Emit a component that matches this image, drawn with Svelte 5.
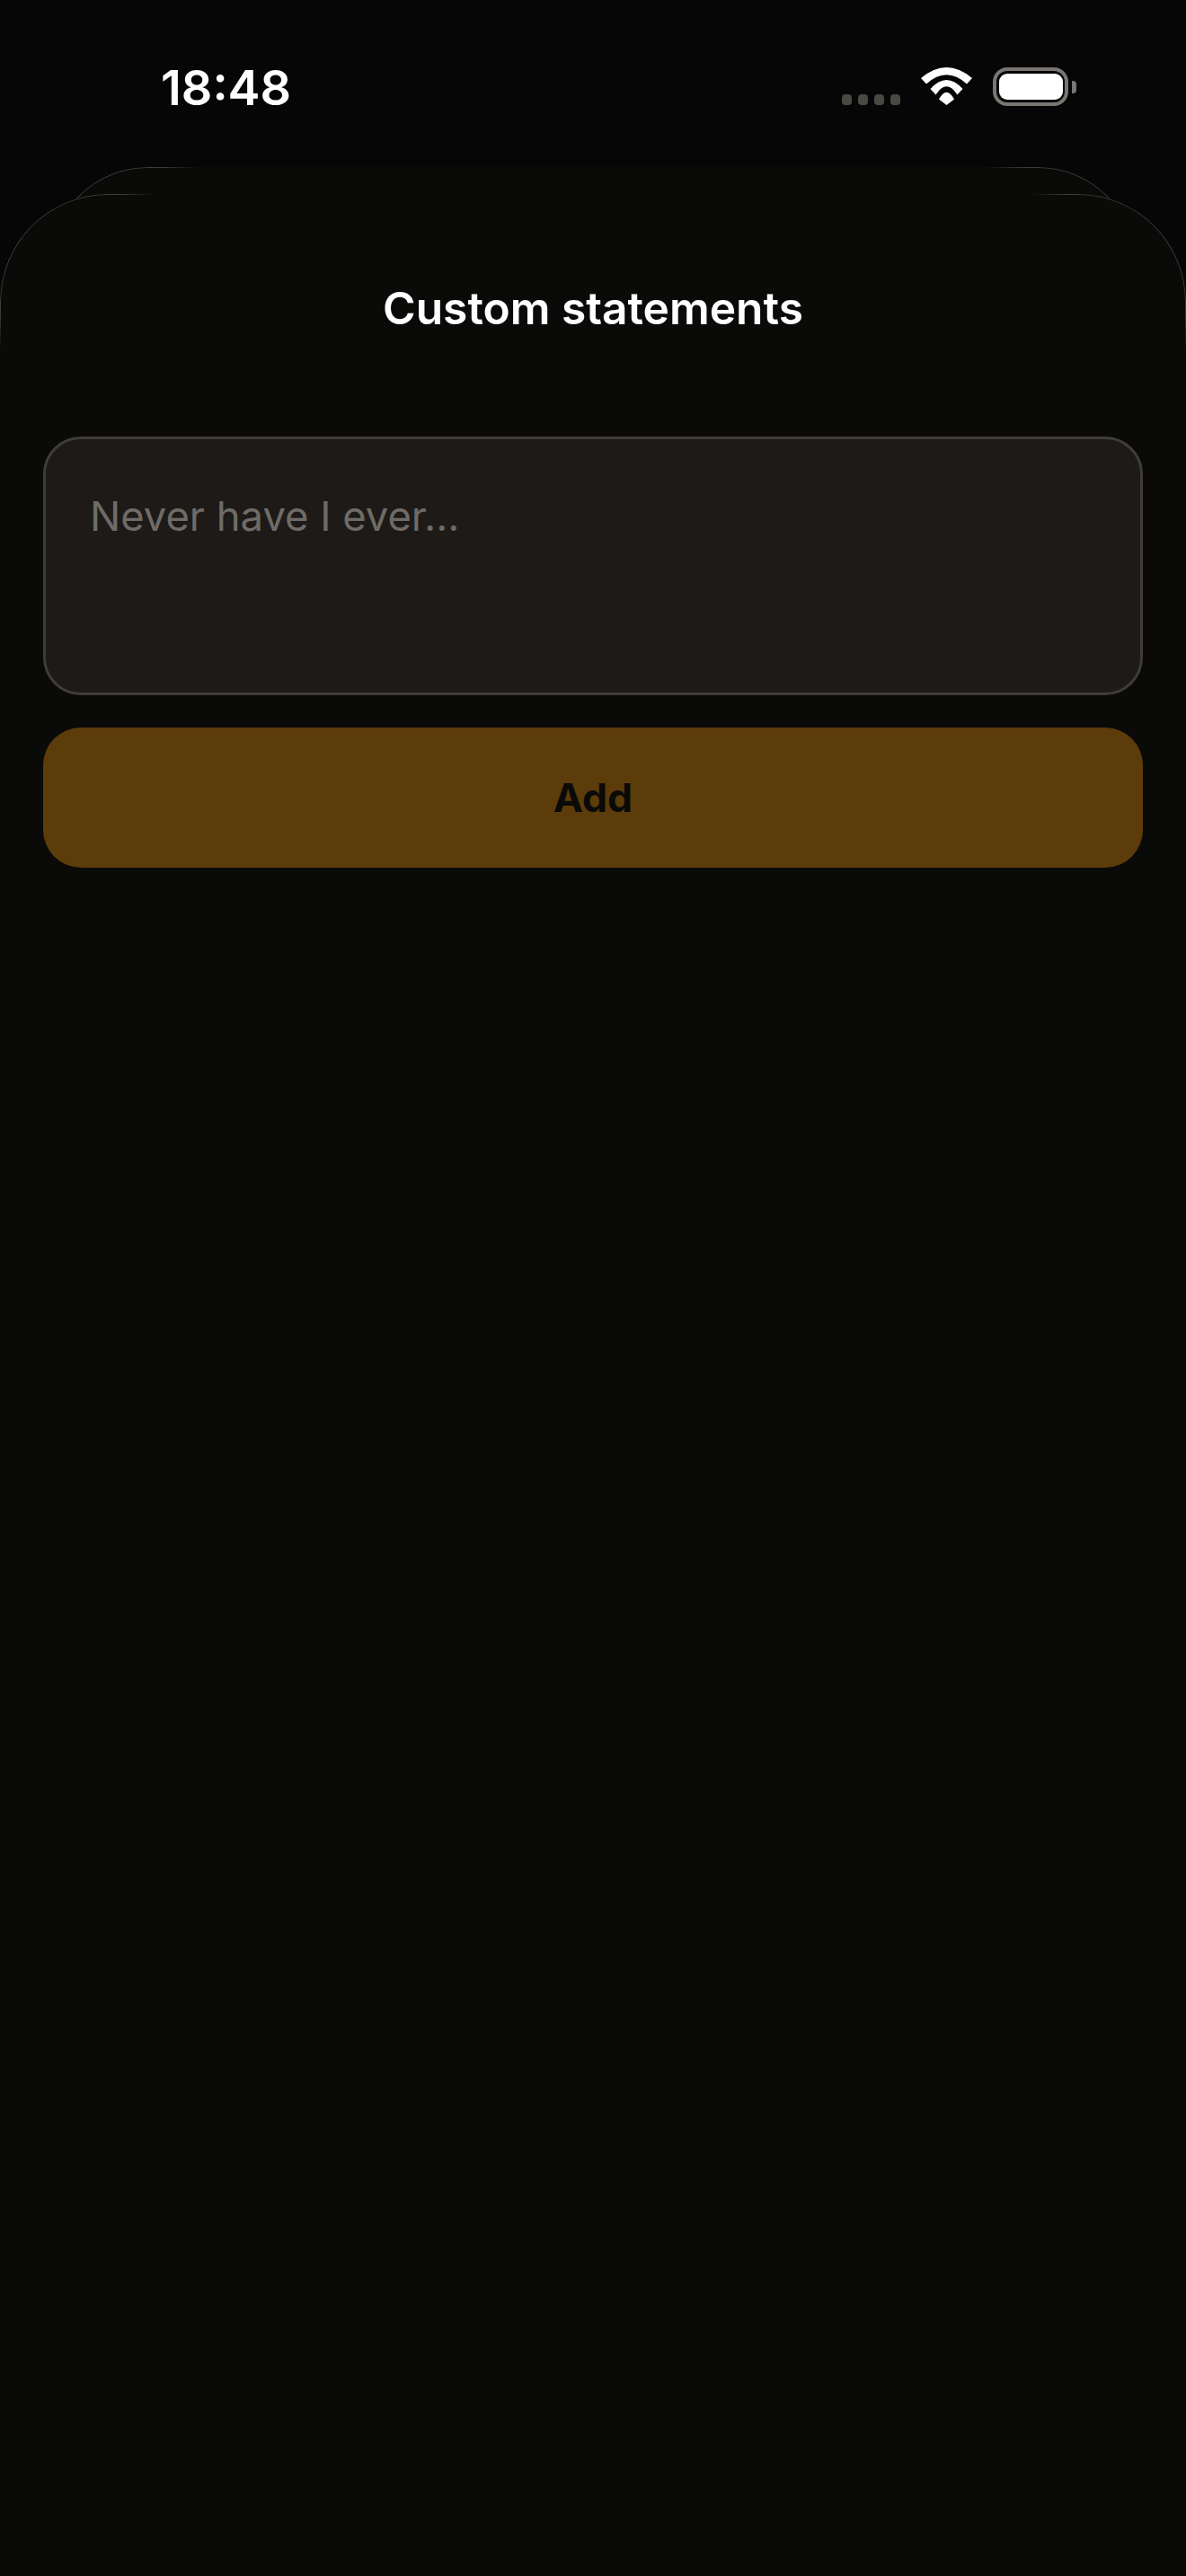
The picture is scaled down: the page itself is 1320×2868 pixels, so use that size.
<script>
  let statement = $state("");
</script>

<div class="page">
  <header class="status">
    <span class="time">18:48</span>
    <div class="status-icons">
      <div class="signal">
        <i></i><i></i><i></i><i></i>
      </div>
      <svg class="wifi" viewBox="0 0 57 42" aria-hidden="true">
        <path d="M0 12 Q28.5 -12 57 12 L51 18.5 Q28.5 -2 6 18.5 Z" />
        <path d="M10.5 24 Q28.5 4 46.5 24 L40.5 30.5 Q28.5 12 16.5 30.5 Z" />
        <path d="M20 35.5 Q28.5 20 37 35.5 L28.5 42 Z" />
      </svg>
      <div class="battery">
        <div class="battery-body"><div class="battery-fill"></div></div>
        <div class="battery-nub"></div>
      </div>
    </div>
  </header>

  <div class="sheet-behind"></div>

  <main class="sheet">
    <h1>Custom statements</h1>
    <textarea bind:value={statement} placeholder="Never have I ever..."></textarea>
    <button type="button">Add</button>
  </main>
</div>

<style>
  :global(body) {
    background: #060606;
  }

  .page {
    display: flex;
    flex-direction: column;
    height: 2868px;
    font-family: Inter, "Liberation Sans", sans-serif;
    background: #060606;
  }

  .status {
    display: flex;
    justify-content: space-between;
    align-items: flex-end;
    box-sizing: border-box;
    height: 186px;
    padding: 0 122px 69px 179px;
  }

  .time {
    position: relative;
    top: 2px;
    font-size: 54px;
    line-height: 42px;
    font-weight: 600;
    color: #fff;
  }

  .status-icons {
    display: flex;
    align-items: flex-end;
    gap: 23px;
  }

  .signal {
    display: flex;
    gap: 7px;
  }

  .signal i {
    display: block;
    width: 11px;
    height: 12px;
    border-radius: 4px;
    background: #4a4843;
  }

  .wifi {
    display: block;
    width: 57px;
    height: 42px;
    fill: #fff;
  }

  .battery {
    display: flex;
    align-items: center;
    gap: 4px;
    margin-bottom: -1px;
  }

  .battery-body {
    box-sizing: border-box;
    width: 84px;
    height: 43px;
    padding: 3px 2px 3px 3px;
    border: 4px solid #7a7672;
    border-radius: 16px;
  }

  .battery-fill {
    height: 100%;
    border-radius: 9px;
    background: #fff;
  }

  .battery-nub {
    width: 5px;
    height: 14px;
    border-radius: 0 4px 4px 0;
    background: #7a7672;
  }

  /* stacked sheet peeking out behind the modal */
  .sheet-behind {
    position: relative;
    height: 30px;
    margin: 0 55px;
  }

  .sheet-behind::before {
    content: "";
    position: absolute;
    top: 0;
    left: 0;
    right: 0;
    height: 170px;
    border-radius: 110px 110px 0 0;
    background: #0a0a09;
  }

  .sheet-behind::after {
    content: "";
    position: absolute;
    top: 0;
    left: 0;
    right: 0;
    height: 170px;
    box-sizing: border-box;
    border: 1px solid #3d3d3a;
    border-bottom: 0;
    border-radius: 110px 110px 0 0;
    mask-image:
      radial-gradient(circle at 0 0, #000 125px, transparent 165px),
      radial-gradient(circle at 100% 0, #000 125px, transparent 165px);
  }

  .sheet {
    position: relative;
    flex: 1;
    display: flex;
    flex-direction: column;
    padding: 0 48px;
    border-radius: 120px 120px 0 0;
    background: #0a0a09;
  }

  /* the hairline only shows around the corners and fades out along the edges */
  .sheet::before {
    content: "";
    position: absolute;
    inset: 0;
    box-sizing: border-box;
    border: 1px solid #3d3d3a;
    border-bottom: 0;
    border-radius: inherit;
    pointer-events: none;
    mask-image:
      radial-gradient(circle at 0 0, #000 135px, transparent 172px),
      radial-gradient(circle at 100% 0, #000 135px, transparent 172px);
  }

  h1 {
    margin: 100px 0 116px;
    font-size: 49.7px;
    line-height: 54px;
    font-weight: 600;
    text-align: center;
    color: #fff;
  }

  textarea {
    display: block;
    box-sizing: border-box;
    width: 100%;
    height: 288px;
    padding: 57px 49px;
    border: 3px solid #403d39;
    border-radius: 42px;
    outline: none;
    resize: none;
    background: #1d1a18;
    color: #fff;
    font: 400 45.4px/58px Inter, "Liberation Sans", sans-serif;
  }

  textarea::placeholder {
    color: #6f6b66;
    opacity: 1;
  }

  button {
    display: block;
    width: 100%;
    height: 156px;
    margin-top: 36px;
    border: 0;
    border-radius: 42px;
    background: #5c3c0a;
    color: #0a0a09;
    font: 700 44.5px/58px Inter, "Liberation Sans", sans-serif;
  }
</style>
